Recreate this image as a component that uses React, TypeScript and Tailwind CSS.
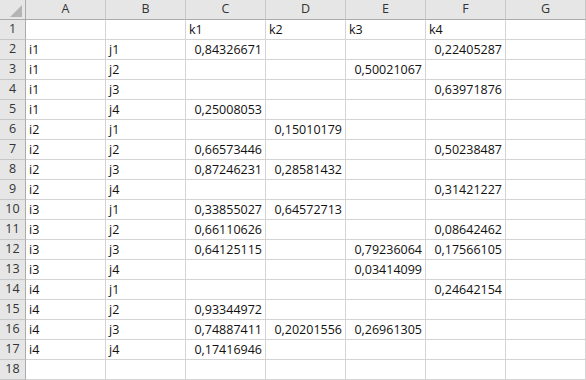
import { Fragment } from 'react';

const COLS = ['A', 'B', 'C', 'D', 'E', 'F', 'G'];

// row data: [A, B, C, D, E, F, G]
const ROWS: string[][] = [
  ['', '', 'k1', 'k2', 'k3', 'k4', ''],
  ['i1', 'j1', '0,84326671', '', '', '0,22405287', ''],
  ['i1', 'j2', '', '', '0,50021067', '', ''],
  ['i1', 'j3', '', '', '', '0,63971876', ''],
  ['i1', 'j4', '0,25008053', '', '', '', ''],
  ['i2', 'j1', '', '0,15010179', '', '', ''],
  ['i2', 'j2', '0,66573446', '', '', '0,50238487', ''],
  ['i2', 'j3', '0,87246231', '0,28581432', '', '', ''],
  ['i2', 'j4', '', '', '', '0,31421227', ''],
  ['i3', 'j1', '0,33855027', '0,64572713', '', '', ''],
  ['i3', 'j2', '0,66110626', '', '', '0,08642462', ''],
  ['i3', 'j3', '0,64125115', '', '0,79236064', '0,17566105', ''],
  ['i3', 'j4', '', '', '0,03414099', '', ''],
  ['i4', 'j1', '', '', '', '0,24642154', ''],
  ['i4', 'j2', '0,93344972', '', '', '', ''],
  ['i4', 'j3', '0,74887411', '0,20201556', '0,26961305', '', ''],
  ['i4', 'j4', '0,17416946', '', '', '', ''],
  ['', '', '', '', '', '', ''],
];

const isNum = (v: string) => /^\d/.test(v);

export default function App() {
  return (
    <div
      className="w-[586px] h-[380px] bg-white overflow-hidden text-[12.5px] text-[#111]"
      style={{ fontFamily: '"Open Sans", "Liberation Sans", sans-serif' }}
    >
      <div className="grid grid-cols-[26px_repeat(7,80px)]">
        {/* corner */}
        <div className="h-[20px] bg-[#e6e6e6] border-r border-b border-[#ababab] relative">
          <svg className="absolute left-[9px] top-[4px]" width="14" height="14" viewBox="0 0 14 14">
            <polygon points="13,1 13,13 1,13" fill="#b4b4b4" />
          </svg>
        </div>
        {COLS.map((c) => (
          <div
            key={c}
            className="h-[20px] bg-[#e6e6e6] border-r border-r-[#c6c6c6] border-b border-b-[#ababab] flex items-center justify-center text-[#333]"
          >
            {c}
          </div>
        ))}

        {ROWS.map((row, i) => (
          <Fragment key={i}>
            <div className="h-[20px] bg-[#e6e6e6] border-r border-r-[#ababab] border-b border-b-[#c6c6c6] flex items-center justify-center text-[#333]">
              {i + 1}
            </div>
            {row.map((v, j) => (
              <div
                key={j}
                className={`h-[20px] border-r border-b border-[#d4d4d4] flex items-center px-[3px] pt-[1px] whitespace-nowrap overflow-visible ${
                  isNum(v) ? 'justify-end' : 'justify-start'
                }`}
              >
                {v}
              </div>
            ))}
          </Fragment>
        ))}
      </div>
    </div>
  );
}
